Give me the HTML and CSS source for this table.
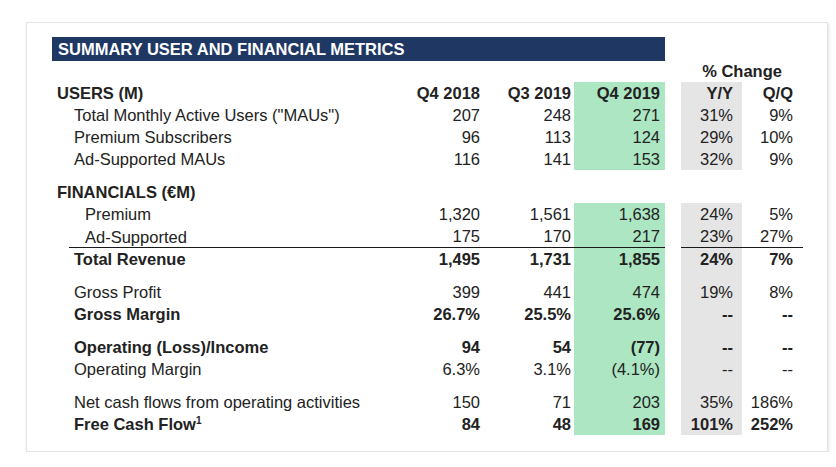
FILE: index.html
```html
<!DOCTYPE html>
<html>
<head>
<meta charset="utf-8">
<link rel="stylesheet" href="styles.css">
</head>
<body>
<div class="card">
  <div class="title">SUMMARY USER AND FINANCIAL METRICS</div>
  <table class="metrics">
    <colgroup>
      <col class="c-label"><col class="c-q1"><col class="c-q2"><col class="c-q3"><col class="c-gap"><col class="c-yy"><col class="c-qq">
    </colgroup>
    <tr class="pct">
      <td></td><td></td><td></td><td></td><td></td><td colspan="2" class="change">% Change</td>
    </tr>
    <tr class="row b">
      <td class="l0">USERS (M)</td><td>Q4 2018</td><td class="q2">Q3 2019</td><td class="g">Q4 2019</td><td></td><td class="y">Y/Y</td><td>Q/Q</td>
    </tr>
    <tr class="row">
      <td class="l1">Total Monthly Active Users ("MAUs")</td><td>207</td><td class="q2">248</td><td class="g">271</td><td></td><td class="y">31%</td><td>9%</td>
    </tr>
    <tr class="row">
      <td class="l1">Premium Subscribers</td><td>96</td><td class="q2">113</td><td class="g">124</td><td></td><td class="y">29%</td><td>10%</td>
    </tr>
    <tr class="row">
      <td class="l1">Ad-Supported MAUs</td><td>116</td><td class="q2">141</td><td class="g">153</td><td></td><td class="y">32%</td><td>9%</td>
    </tr>
    <tr class="sp"><td colspan="7"></td></tr>
    <tr class="row b">
      <td class="l0">FINANCIALS (€M)</td><td></td><td></td><td></td><td></td><td></td><td></td>
    </tr>
    <tr class="row">
      <td class="l2">Premium</td><td>1,320</td><td class="q2">1,561</td><td class="g">1,638</td><td></td><td class="y">24%</td><td>5%</td>
    </tr>
    <tr class="row rule">
      <td class="l2 lnl">Ad-Supported</td><td class="ln">175</td><td class="q2 ln">170</td><td class="g ln">217</td><td></td><td class="y ln">23%</td><td class="ln">27%</td>
    </tr>
    <tr class="row b">
      <td class="l1">Total Revenue</td><td>1,495</td><td class="q2">1,731</td><td class="g">1,855</td><td></td><td class="y">24%</td><td>7%</td>
    </tr>
    <tr class="sp"><td></td><td></td><td></td><td class="g"></td><td></td><td class="y"></td><td></td></tr>
    <tr class="row">
      <td class="l1">Gross Profit</td><td>399</td><td class="q2">441</td><td class="g">474</td><td></td><td class="y">19%</td><td>8%</td>
    </tr>
    <tr class="row b">
      <td class="l1">Gross Margin</td><td>26.7%</td><td class="q2">25.5%</td><td class="g">25.6%</td><td></td><td class="y">--</td><td>--</td>
    </tr>
    <tr class="sp"><td></td><td></td><td></td><td class="g"></td><td></td><td class="y"></td><td></td></tr>
    <tr class="row b">
      <td class="l1">Operating (Loss)/Income</td><td>94</td><td class="q2">54</td><td class="g">(77)</td><td></td><td class="y">--</td><td>--</td>
    </tr>
    <tr class="row">
      <td class="l1">Operating Margin</td><td>6.3%</td><td class="q2">3.1%</td><td class="g">(4.1%)</td><td></td><td class="y">--</td><td>--</td>
    </tr>
    <tr class="sp"><td></td><td></td><td></td><td class="g"></td><td></td><td class="y"></td><td></td></tr>
    <tr class="row">
      <td class="l1">Net cash flows from operating activities</td><td>150</td><td class="q2">71</td><td class="g">203</td><td></td><td class="y">35%</td><td>186%</td>
    </tr>
    <tr class="row b last">
      <td class="l1">Free Cash Flow<sup>1</sup></td><td>84</td><td class="q2">48</td><td class="g">169</td><td></td><td class="y">101%</td><td>252%</td>
    </tr>
  </table>
</div>
</body>
</html>
```

FILE: styles.css
```css
html, body {
  margin: 0;
  padding: 0;
  background: #ffffff;
}
body {
  font-family: "Liberation Sans", Arial, sans-serif;
  color: #222222;
}
.card {
  margin: 22px 0 0 26px;
  width: 775px;
  height: 414px;
  border: 1px solid #e4e4e4;
  box-shadow: 1px 2px 3px rgba(0, 0, 0, 0.12);
  padding: 14px 0 0 25px;
}
.title {
  width: 613px;
  height: 24px;
  background: #1f3763;
  color: #ffffff;
  font-weight: bold;
  font-size: 16.5px;
  line-height: 25px;
  padding-left: 6px;
  box-sizing: border-box;
}
.metrics {
  border-collapse: separate;
  border-spacing: 0;
  table-layout: fixed;
  width: 751px;
  font-size: 16.5px;
}
.c-label { width: 348px; }
.c-q1 { width: 85px; }
.c-q2 { width: 89px; }
.c-q3 { width: 91px; }
.c-gap { width: 16px; }
.c-yy { width: 61px; }
.c-qq { width: 61px; }
.metrics td {
  padding: 0;
  text-align: right;
  white-space: nowrap;
  line-height: 22px;
  height: 22px;
}
.metrics td:nth-child(2) { padding-right: 5px; }
.metrics td.q2 { padding-right: 3px; }
.metrics td.g { padding-right: 5px; background: #ace6c2; }
.metrics td.y { padding-right: 9px; background: #e5e5e5; }
.metrics td:nth-child(7) { padding-right: 10px; }
.metrics td.l0, .metrics td.l1, .metrics td.l2 { text-align: left; }
.metrics td.l0 { padding-left: 5px; }
.metrics td.l1 { padding-left: 22px; }
.metrics td.l2 { padding-left: 33px; }
.pct td { height: 21px; line-height: 21px; }
.metrics td.change {
  text-align: center;
  font-weight: bold;
  padding-right: 0;
}
.row.b td { font-weight: bold; }
.sp td { height: 11px; line-height: 11px; }
.metrics td.ln {
  height: 21px;
  line-height: 22px;
  border-bottom: 1px solid #1a1a1a;
}
.metrics td.lnl {
  height: 21px;
  line-height: 22px;
  background: linear-gradient(#1a1a1a, #1a1a1a) no-repeat 17px 100% / calc(100% - 17px) 1px;
}
.row.rule td { vertical-align: middle; }
sup {
  font-size: 10px;
  line-height: 0;
  vertical-align: 6px;
}
```
